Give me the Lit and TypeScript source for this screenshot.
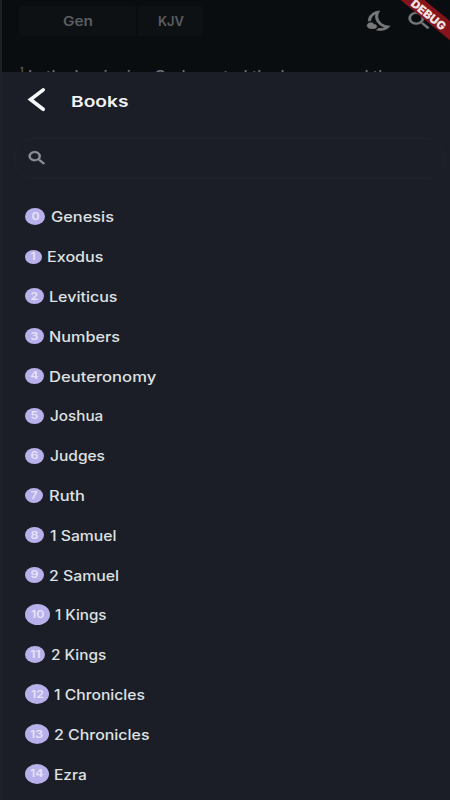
import { LitElement, html, css, svg } from "lit";
import { customElement } from "lit/decorators.js";

// name, text x, text width, badge width, badge height
const BOOKS: [string, number, number, number, number][] = [
  ["Genesis", 50.7, 63, 20, 17],
  ["Exodus", 46.7, 56.5, 16.5, 14],
  ["Leviticus", 49, 68.5, 19, 16],
  ["Numbers", 49, 71, 19, 16],
  ["Deuteronomy", 49.3, 107.2, 19, 16],
  ["Joshua", 49.5, 53.3, 19, 16],
  ["Judges", 49.5, 55, 19, 16],
  ["Ruth", 48.5, 36, 18, 15],
  ["1 Samuel", 49.5, 66.5, 19, 16],
  ["2 Samuel", 49.3, 70, 19, 16],
  ["1 Kings", 55, 51.5, 25, 21],
  ["2 Kings", 50.9, 55.2, 20, 17],
  ["1 Chronicles", 54, 91, 24, 20],
  ["2 Chronicles", 53.5, 95.5, 24, 20],
  ["Ezra", 53.5, 32.7, 24, 20],
];

const fitted = (text: string, width: number, cls = "") => html`
  <svg class="fit ${cls}" width=${width} height="20">
    ${svg`<text x="0" y="15" textLength=${width} lengthAdjust="spacingAndGlyphs">${text}</text>`}
  </svg>`;

const SEARCH =
  "M15.5 14h-.79l-.28-.27C15.41 12.59 16 11.11 16 9.5 16 5.91 13.09 3 9.5 3S3 5.91 3 9.5 5.91 16 9.5 16c1.61 0 3.09-.59 4.23-1.57l.27.28v.79l5 4.99L20.49 19l-4.99-5zm-6 0C7.01 14 5 11.99 5 9.5S7.01 5 9.5 5 14 7.01 14 9.5 11.99 14 9.5 14z";

@customElement("app-root")
export class AppRoot extends LitElement {
  static styles = css`
    :host {
      display: block;
      position: relative;
      box-sizing: border-box;
      width: 450px;
      height: 800px;
      overflow: hidden;
      background: #0a0d10;
      font-family: Inter, "Open Sans", sans-serif;
      border-left: 2px solid #1d2027;
    }
    svg { display: block; flex: none; }
    .fit { overflow: visible; }
    .fit text { fill: currentColor; }
    .top { height: 71.5px; overflow: hidden; box-sizing: border-box; padding-top: 6px; }
    .bar { display: flex; height: 46px; padding-left: 17px; align-items: flex-start; }
    .chip {
      height: 30px;
      background: #0e1114;
      display: flex;
      align-items: center;
      justify-content: center;
      color: #5c5e60;
      font-size: 13px;
      font-weight: 600;
      border-radius: 2px;
    }
    .gen { width: 117px; margin-right: 2px; }
    .kjv { width: 65px; }
    .moon { margin: 3px 0 0 162.5px; }
    .find { margin: 2.8px 0 0 10.5px; }
    .verse { display: flex; padding: 14px 0 0 18px; color: #707274; font-size: 14px; font-weight: 500; }
    .num { font-size: 8px; width: 8px; line-height: 10px; margin-top: -1px; }
    .ribbon {
      position: absolute;
      right: -39px;
      top: 5.8px;
      width: 120px;
      height: 15px;
      transform: rotate(39.2deg);
      background: #86151b;
      color: #eee3e3;
      display: flex;
      align-items: center;
      justify-content: center;
      font-size: 11.5px;
      font-weight: 900;
    }
    .sheet { height: 728.5px; background: #1b1e26; }
    .head { height: 66px; box-sizing: border-box; display: flex; padding: 15.5px 0 0 25px; color: #f3f4f5; }
    .title { font-size: 15px; font-weight: 600; margin: 4.6px 0 0 25.3px; }
    .search {
      height: 41px;
      box-sizing: border-box;
      margin: 0 5px 0 12px;
      border: 1px solid #20232b;
      border-radius: 21px;
      padding: 10.5px 0 0 10.8px;
    }
    .list { padding-top: 18.4px; }
    .row { height: 39.8px; display: flex; align-items: center; padding-left: 23px; color: #dfe1e2; }
    .badge {
      border-radius: 50%;
      background: #b8b0ea;
      color: #e6e3fb;
      display: flex;
      align-items: center;
      justify-content: center;
      font-size: 10.5px;
      font-weight: 600;
      flex: none;
    }
    .digit { transform: scaleX(1.18); }
    .name { font-size: 14px; font-weight: 500; padding-top: 1.2px; }
  `;

  render() {
    return html`
      <div class="top">
        <div class="bar">
          <div class="chip gen">${fitted("Gen", 30)}</div>
          <div class="chip kjv">${fitted("KJV", 26)}</div>
          <svg class="moon" width="28.5" height="23.4" viewBox="0 0 24 24" preserveAspectRatio="none" fill="#77797a" stroke="#77797a" stroke-width=".7">
            <path d="M19.78 17.51c-2.47 0-6.57-1.33-8.68-5.43C8.77 7.57 10.6 3.6 11.63 2.01 6.27 2.2 1.98 6.59 1.98 12c0 .14.02.28.02.42.62-.27 1.29-.42 2-.42 0-3.09 1.73-5.77 4.3-7.1C7.78 7.09 7.74 9.94 9.32 13c1.57 3.04 4.18 4.95 6.8 5.86-1.23.74-2.65 1.15-4.13 1.15-.5 0-1-.05-1.48-.14-.37.7-.94 1.27-1.64 1.64.98.32 2.03.5 3.11.5 3.5 0 6.58-1.8 8.37-4.52-.18.02-.38.02-.57.02z" />
            <path d="M7 16h-.18C6.4 14.84 5.3 14 4 14c-1.66 0-3 1.34-3 3s1.34 3 3 3h3c1.1 0 2-.9 2-2s-.9-2-2-2z" />
          </svg>
          <svg class="find" width="28.5" height="23.4" viewBox="0 0 24 24" preserveAspectRatio="none" fill="#77797a" stroke="#77797a" stroke-width=".35"><path d=${SEARCH} /></svg>
        </div>
        <div class="verse"><span class="num">1</span>${fitted("In the beginning God created the heaven and the", 369)}</div>
      </div>
      <div class="ribbon">${fitted("DEBUG", 41)}</div>
      <div class="sheet">
        <div class="head">
          <svg width="19" height="26" viewBox="0 0 19 26" fill="none" stroke="#f6f7f8" stroke-width="3.6" stroke-linecap="round">
            <path d="M16.2 2.9 3.5 12.5 16.2 22.3" />
          </svg>
          <div class="title">${fitted("Books", 57.5)}</div>
        </div>
        <div class="search">
          <svg width="22" height="18" viewBox="0 0 24 24" preserveAspectRatio="none" fill="#8f949b" stroke="#8f949b" stroke-width=".7"><path d=${SEARCH} /></svg>
        </div>
        <div class="list">
          ${BOOKS.map(
            ([name, x, w, bw, bh], i) => html`
              <div class="row">
                <div class="badge" style="width:${bw}px;height:${bh}px"><span class="digit">${i}</span></div>
                <div class="name" style="margin-left:${x - 25 - bw}px">${fitted(name, w)}</div>
              </div>`
          )}
        </div>
      </div>`;
  }
}
